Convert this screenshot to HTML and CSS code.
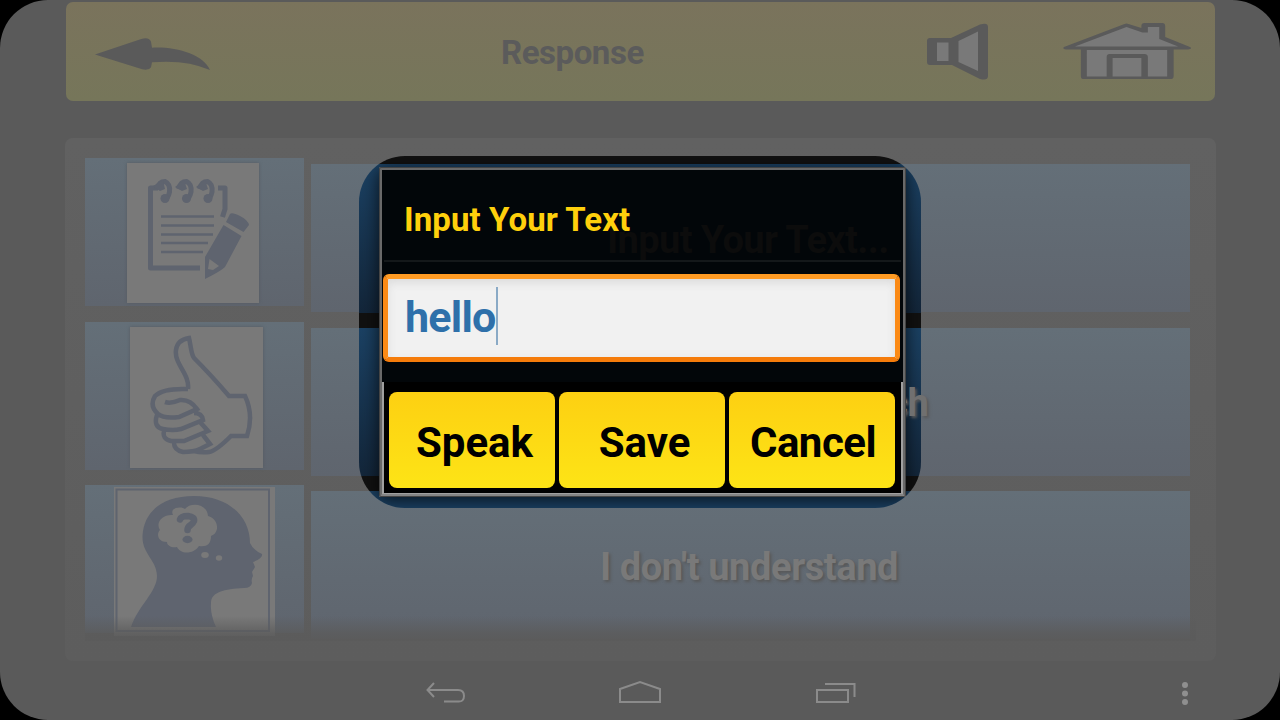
FILE: index.html
```html
<!DOCTYPE html>
<html lang="en">
<head>
<meta charset="utf-8">
<title>Response</title>
<link rel="stylesheet" href="styles.css">
</head>
<body>
<div class="screen">
  <header class="topbar">
    <svg class="back" width="118" height="35" viewBox="0 0 120 36" preserveAspectRatio="none"><path d="M2 18 46 3Q57-1 59 5L60 11C86 10 112 18 119 34Q95 23 60 26L59 31Q56 36 46 32Z"/></svg>
    <h1 class="title">Response</h1>
    <svg class="speaker" width="62" height="58" viewBox="0 0 62 58"><path class="ink" d="M3 15H24L53 1.500Q61-1 61 4V53Q61 58 53 56L25 42H3Q0 42 0 39V18Q0 15 3 15Z"/><path class="pale" d="M10 19.500H21.500V38H10ZM31.500 18 51 8.500V48L31.500 39Z"/></svg>
    <svg class="house" width="128" height="57" viewBox="0 0 129 57" preserveAspectRatio="none"><path class="ink" d="M1 24 62 1Q64 0 66 1L79 5V3Q79 0 82 0H100Q103 0 103 3V14L128 24Q131 26 126 26.500H111.500V53Q111.500 56 109 56H20Q18 56 18 53V26.500H3Q-1 26 1 24Z"/><path class="pale" d="M12 23.500 64 4 80 9.500H85.500V4H97V16L116 23.500ZM24 27H105V53.500H85.500V34Q85.500 31 82 31H47Q44 31 44 34V53.500H24ZM50 35H79V53.500H50Z"/></svg>
  </header>

  <main class="panel">
    <div class="column icons">
      <div class="tile">
        <svg class="card note" width="132" height="140" viewBox="127 163 132 140">
          <path class="line" style="stroke-width:5" stroke-linejoin="round" d="M158 188H150.500V268H200M218 188H225V209L222.500 217"/>
          <g class="line" style="stroke-width:5"><path id="ring" d="M157 189Q159 181.500 165 181.500Q170.500 184 169.500 192Q168 199 165 199"/><use href="#ring" x="21.500"/><use href="#ring" x="42.500"/></g>
          <path class="fill" d="M153 186 163 180 165 189 160 191ZM175 187 184 180 187 189 182 191ZM196 187 205 180 208 189 203 191Z"/>
          <g class="fill"><circle cx="165" cy="198.500" r="4.500"/><circle cx="186.500" cy="198.500" r="4.500"/><circle cx="208" cy="198.500" r="4.500"/></g>
          <path class="line" style="stroke-width:2.600" d="M161 216.500H214M161 225.500H214M161 234.500H213M161 243H208M161 252H203"/>
          <path class="fill" fill-rule="evenodd" d="M230 214Q232 212 240 216Q248 220 249 225L243.500 232 226 222ZM223.500 225 241.500 236 225 267Q221 271 205 279V257ZM209.500 259 208 269 213 270 219 266Z"/>
        </svg>
      </div>
      <div class="tile">
        <svg class="card thumb" width="133" height="141" viewBox="130 327 133 141">
          <path class="line" style="stroke-width:4.500" d="M188 389C190 374 174 364 176 350C177 342 183 339 189 338C191 346 191 354 194 358C206 370 217 382 229 396H245Q254 415 247 436H231Q216 451 209 452Q201 453 194 451M188 389Q163 388 155 396Q149 406 158 414Q164 419 179 417L197 409Q190 399 180 400Q171 404 165 402M157 415Q153 427 163 429Q173 431 181 429L203 420Q202 413 194 413M164 431Q162 439 171 441H184L208 431L200 422M174 443Q174 450 183 452Q194 452 200 449L210 444 203 435"/>
        </svg>
      </div>
      <div class="tile">
        <svg class="card head" width="161" height="149" viewBox="114 487 161 149">
          <path class="frame" d="M116.500 489.500H269V631H116.500Z"/>
          <path class="fill" d="M131 627C138 606 157 592 157 576C157 560 142 554 142.500 536C144 510 164 496 194 496C228 496 250 516 250 543Q253 550 262 554Q263 558 253 562L255 567 252 572 253 576Q251 579 252 583Q251 588 244 588C224 589 211 592 211 603Q210 614 216 627Z"/>
          <path class="hole" d="M173 515C169 507 182 506 185 509C190 502 207 503 208 516C219 519 220 533 211 536C211 545 206 547 199 546C193 555 180 554 177 547C172 548 167 546 167 542C158 542 156 534 160 530C155 522 163 514 173 515Z"/>
          <g class="hole"><ellipse cx="205" cy="555" rx="3.800" ry="3"/><ellipse cx="219" cy="558" rx="3.200" ry="2.700"/></g>
          <path class="line" style="stroke-width:6.500" stroke-linecap="round" d="M180 519.500Q181 516 188 516Q195 517 194 521C192 526 187.500 525 187.500 530"/>
          <ellipse class="fill" cx="187.500" cy="539.500" rx="5" ry="3.700"/>
        </svg>
      </div>
    </div>
    <div class="column phrases">
      <div class="tile"></div>
      <div class="tile"></div>
      <div class="tile"><span class="phrase">I don't understand</span></div>
    </div>
    <div class="fade"></div>
  </main>

  <nav class="navbar">
    <svg class="nav-back" width="40" height="22" viewBox="0 0 40 22"><path d="M8 1 1.500 8 8 15M2 8H32Q38 8 38 14T32 19.500H18"/></svg>
    <svg class="nav-home" width="44" height="24" viewBox="0 0 44 24"><path d="M2 9 22 2 42 9V22H2Z"/></svg>
    <svg class="nav-recent" width="42" height="22" viewBox="0 0 42 22"><path d="M2 8H33V20H2ZM10 2H39.500V15"/></svg>
    <svg class="nav-more" width="8" height="26" viewBox="0 0 8 26"><circle cx="4" cy="4" r="3"/><circle cx="4" cy="12.500" r="3"/><circle cx="4" cy="21" r="3"/></svg>
  </nav>

  <div class="spotlight"><div class="dialog-shadow"></div></div>
  <span class="phrase behind">ch</span>
  <div class="dialog">
    <section class="dialog-top">
      <span class="ghost">Input Your Text...</span>
      <h2 class="dialog-title">Input Your Text</h2>
      <div class="field"><span class="value">hello</span><i class="caret"></i></div>
    </section>
    <section class="actions">
      <button class="btn">Speak</button>
      <button class="btn">Save</button>
      <button class="btn cancel">Cancel</button>
    </section>
  </div>
</div>
</body>
</html>
```
FILE: styles.css
```css
* { box-sizing: border-box; }
body { margin: 0; background: #000; font-family: Roboto, sans-serif; font-weight: 700; }
h1, h2 { margin: 0; font-weight: 700; }
svg { display: block; flex: none; }
.screen { position: relative; width: 1280px; height: 720px; overflow: hidden; padding: 2px 65px 0 66px; background: #5a5a5a; border-radius: 48px; display: flex; flex-direction: column; }

.topbar { height: 99px; flex: none; display: flex; align-items: flex-start; border-radius: 7px; background: linear-gradient(#7a735c, #76765a); }
.back { margin: 35px 0 0 27px; fill: #5a5a5a; }
.title { width: 144px; margin: 31px 0 0 290px; font-size: 33px; line-height: 40px; letter-spacing: -.45px; color: #5b5b5b; white-space: nowrap; }
.speaker { margin: 21px 0 0 282px; }
.house { margin: 21px 0 0 74px; }
.ink { fill: #5a5a5a; }
.pale { fill: #797979; }

.panel { position: relative; width: 1151px; height: 523px; flex: none; margin: 37px 0 0 -1px; padding: 20px 0 0 20px; display: flex; gap: 7px; border-radius: 8px; background: linear-gradient(#616161, #5d5d5d); }
.column { display: flex; flex-direction: column; gap: 15.5px; }
.icons { width: 219px; }
.phrases { width: 879px; padding-top: 6px; }
.tile { height: 148px; flex: none; display: flex; justify-content: center; align-items: flex-start; background: linear-gradient(#646f78, #5f656e); }
.card { background: #797979; }
.note { margin: 5px 0 0 -3px; box-shadow: 0 0 3px #555b61; }
.thumb { margin: 5px 0 0 4px; box-shadow: 0 0 3px #555b61; }
.head { margin: 2px 0 0; }
.fill { fill: #5f646f; }
.hole { fill: #797979; }
.line { fill: none; stroke: #5f646f; }
.frame { fill: none; stroke: #5f646f; stroke-width: 2; }
.phrase { font-size: 38px; line-height: 46px; letter-spacing: -.4px; color: #797979; text-shadow: 2px 2px 3px #585858; white-space: nowrap; }
.phrases .phrase { margin: 53px 3px 0 0; }
.fade { position: absolute; left: 20px; top: 478px; width: 1111px; height: 25px; background: linear-gradient(#5b5b5b00, #5b5b5bcc 70%, #5b5b5b); }

.navbar { display: flex; align-items: flex-start; padding: 20px 0 0 360px; fill: none; stroke: #8b8b8b; stroke-width: 2; }
.nav-back { margin-top: 1px; }
.nav-home { margin: -1px 0 0 152px; }
.nav-recent { margin: 1px 0 0 153px; }
.nav-more { margin: 0 0 0 324px; fill: #8f8f8f; stroke: none; }

.spotlight { position: absolute; left: 359px; top: 156px; width: 562px; height: 352px; overflow: hidden; border-radius: 46px; background: linear-gradient(#111 8px, #1b4163 8px, #13263a 157px, #111 157px, #111 172px, #1b4163 172px, #13263a 320px, #111 320px, #111 335px, #1b4163 335px); }
.dialog-shadow { width: 527px; height: 330px; margin: 11px 0 0 20px; box-shadow: 0 3px 16px #000b; }
.behind { position: absolute; left: 888px; top: 380px; color: #707070; }
.dialog { position: absolute; left: 379px; top: 167px; width: 527px; height: 330px; border: 3px solid #696969; outline: 1px solid #444; outline-offset: -1px; border-bottom-color: #858585; border-radius: 2px; background: #000; display: flex; flex-direction: column; }
.dialog-top { position: relative; height: 212px; flex: none; padding: 27px 2px 0; background: #020609; }
.dialog-title { position: relative; padding-left: 20px; height: 65px; font-size: 33px; line-height: 46px; letter-spacing: .07px; color: #ffd00c; white-space: nowrap; border-bottom: 2px solid #14181a; }
.ghost { position: absolute; left: 225px; top: 47px; font-size: 38px; line-height: 46px; letter-spacing: -.6px; color: #0c0c0c; white-space: nowrap; }
.field { width: 517px; height: 88px; margin: 12px 0 0 -1px; padding: 7px 17px; display: flex; align-items: flex-start; border: 5px solid #fb8a15; border-color: #ff9b23 #fb8a15 #f57c0b; border-radius: 6px; background: #f1f1f1; box-shadow: inset 0 4px 8px #dcdcdc; }
.value { margin-top: 1px; font-size: 43px; line-height: 60px; letter-spacing: -.75px; color: #2e70aa; }
.caret { width: 2px; height: 58px; margin-top: 1px; background: #8aaac6; }
.actions { height: 112px; flex: none; display: grid; grid-template-columns: repeat(3, 166px); gap: 4px; padding: 10px 0 0 5px; background: #000; border: solid #a0a0a0; border-width: 0 2px 1px; }
.btn { height: 96px; padding: 4px 0 0 5px; border: 0; border-radius: 8px; font: 700 42px Roboto, sans-serif; color: #000; background: linear-gradient(#fdd012, #fde416); }
.cancel { padding-left: 2px; letter-spacing: -.5px; }
```
